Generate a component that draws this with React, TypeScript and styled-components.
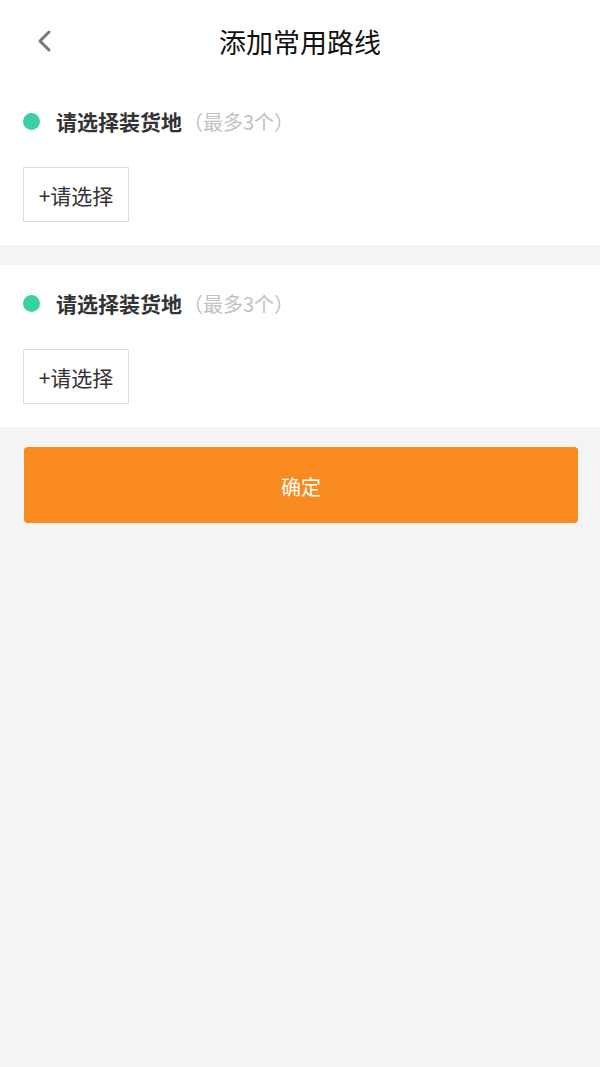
import { createGlobalStyle, styled } from "styled-components";

const GlobalStyle = createGlobalStyle`
  html, body {
    margin: 0;
    padding: 0;
    background: #f4f4f4;
    font-family: "Noto Sans CJK SC", "Noto Sans", sans-serif;
  }
`;

const Page = styled.div`
  min-height: 100vh;
  background: #f4f4f4;
`;

const Header = styled.div`
  display: grid;
  grid-template-columns: 80px 1fr 80px;
  align-items: center;
  height: 83px;
  background: #fff;
`;

const BackButton = styled.button`
  display: flex;
  align-items: center;
  justify-content: flex-start;
  padding: 0 0 0 36px;
  margin-top: -2px;
  border: 0;
  background: transparent;
  cursor: pointer;
`;

const Title = styled.h1`
  margin: 0;
  text-align: center;
  font-size: 27px;
  font-weight: 400;
  color: #111;
  line-height: 1;
`;

const Section = styled.div<{ $gap?: boolean }>`
  background: #fff;
  padding: 23px 0 23px 23px;
  margin-top: ${(p) => (p.$gap ? "20px" : "0")};
`;

const SectionHead = styled.div`
  display: flex;
  align-items: center;
  height: 30px;
`;

const Dot = styled.span`
  width: 17px;
  height: 17px;
  border-radius: 50%;
  background: #3ccfa4;
  margin-right: 16px;
`;

const HeadText = styled.span`
  font-size: 21px;
  font-weight: 700;
  color: #333;
`;

const HeadHint = styled.span`
  font-size: 20px;
  color: #c2c2c2;
  margin-left: 1px;
`;

const PickButton = styled.button`
  margin-top: 31px;
  width: 106px;
  height: 55px;
  border: 1px solid #dedede;
  background: #fff;
  font-family: inherit;
  font-size: 21px;
  color: #333;
  padding: 0;
  cursor: pointer;
`;

const Footer = styled.div`
  padding: 20px 22px 0 24px;
`;

const Confirm = styled.button`
  width: 100%;
  height: 76px;
  border: 0;
  border-radius: 4px;
  background: #f98a20;
  color: #fff;
  font-family: inherit;
  font-size: 20px;
  padding-top: 3px;
  cursor: pointer;
`;

function RouteBlock({ gap }: { gap?: boolean }) {
  return (
    <Section $gap={gap}>
      <SectionHead>
        <Dot />
        <HeadText>请选择装货地</HeadText>
        <HeadHint>（最多3个）</HeadHint>
      </SectionHead>
      <PickButton>+请选择</PickButton>
    </Section>
  );
}

export default function App() {
  return (
    <Page>
      <GlobalStyle />
      <Header>
        <BackButton>
          <svg width="16" height="24" viewBox="0 0 16 24">
            <path d="M13 3 L4 12 L13 21" fill="none" stroke="#777" strokeWidth="3" strokeLinecap="round" strokeLinejoin="round" />
          </svg>
        </BackButton>
        <Title>添加常用路线</Title>
        <div />
      </Header>
      <RouteBlock />
      <RouteBlock gap />
      <Footer>
        <Confirm>确定</Confirm>
      </Footer>
    </Page>
  );
}
